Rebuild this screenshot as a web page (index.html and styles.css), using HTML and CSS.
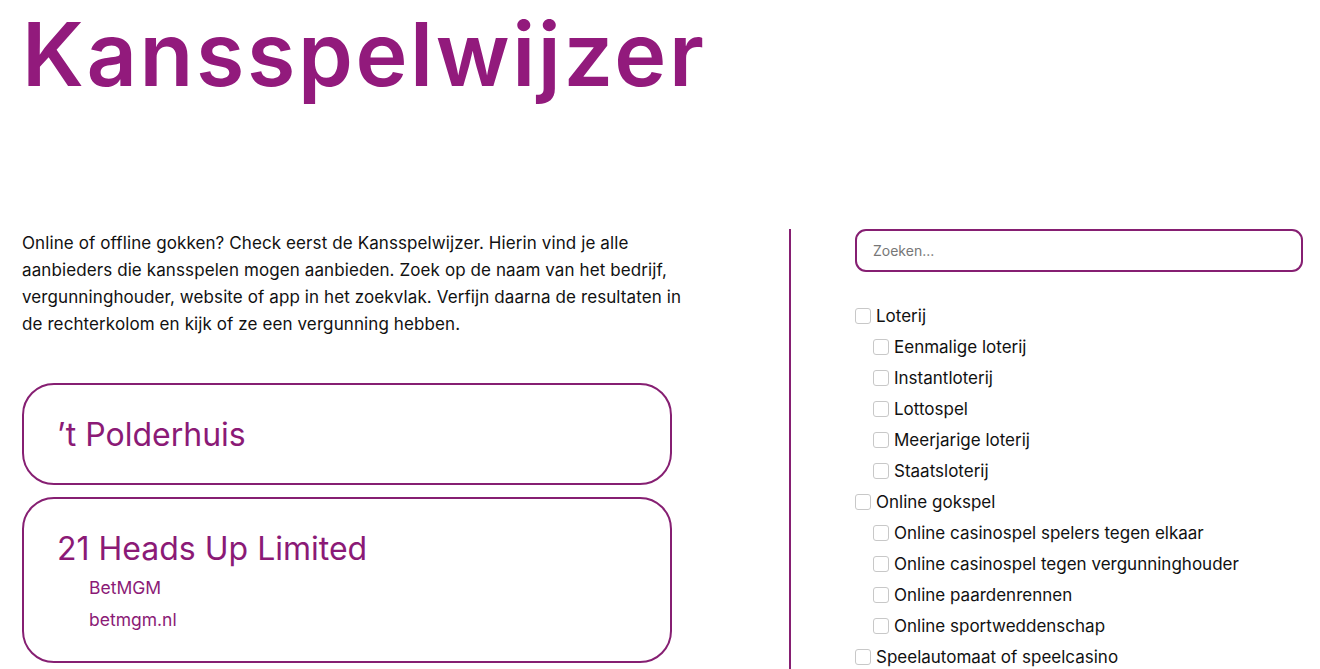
FILE: index.html
```html
<!DOCTYPE html>
<html lang="nl">
<head>
<meta charset="utf-8">
<title>Kansspelwijzer</title>
<link rel="stylesheet" href="styles.css">
</head>
<body>
<header class="page-header">
  <h1 class="title">Kansspelwijzer</h1>
</header>
<main class="layout">
  <section class="results">
    <p class="intro">Online of offline gokken? Check eerst de Kansspelwijzer. Hierin vind je alle aanbieders die kansspelen mogen aanbieden. Zoek op de naam van het bedrijf, vergunninghouder, website of app in het zoekvlak. Verfijn daarna de resultaten in de rechterkolom en kijk of ze een vergunning hebben.</p>
    <div class="cards">
      <article class="card">
        <h2 class="card-title">’t Polderhuis</h2>
      </article>
      <article class="card">
        <h2 class="card-title">21 Heads Up Limited</h2>
        <ul class="card-links">
          <li>BetMGM</li>
          <li>betmgm.nl</li>
        </ul>
      </article>
    </div>
  </section>
  <aside class="filters">
    <input class="search" type="text" placeholder="Zoeken...">
    <ul class="tree">
      <li><label class="opt"><span class="box"></span>Loterij</label>
        <ul class="sub">
          <li><label class="opt"><span class="box"></span>Eenmalige loterij</label></li>
          <li><label class="opt"><span class="box"></span>Instantloterij</label></li>
          <li><label class="opt"><span class="box"></span>Lottospel</label></li>
          <li><label class="opt"><span class="box"></span>Meerjarige loterij</label></li>
          <li><label class="opt"><span class="box"></span>Staatsloterij</label></li>
        </ul>
      </li>
      <li><label class="opt"><span class="box"></span>Online gokspel</label>
        <ul class="sub">
          <li><label class="opt"><span class="box"></span>Online casinospel spelers tegen elkaar</label></li>
          <li><label class="opt"><span class="box"></span>Online casinospel tegen vergunninghouder</label></li>
          <li><label class="opt"><span class="box"></span>Online paardenrennen</label></li>
          <li><label class="opt"><span class="box"></span>Online sportweddenschap</label></li>
        </ul>
      </li>
      <li><label class="opt"><span class="box"></span>Speelautomaat of speelcasino</label></li>
    </ul>
  </aside>
</main>
</body>
</html>
```
FILE: styles.css
```css
* { box-sizing: border-box; }
html, body { margin: 0; padding: 0; background: #fff; }
body {
  font-family: "Inter", "Liberation Sans", Arial, sans-serif;
  color: #111;
}
.page-header {
  padding: 0 22px;
  height: 229px;
}
.title {
  margin: 0;
  padding-top: 10px;
  font-family: "Inter", "Liberation Sans", Arial, sans-serif;
  font-weight: 600;
  font-size: 88px;
  line-height: 88px;
  letter-spacing: 2.6px;
  color: #921a7c;
}
.layout {
  display: grid;
  grid-template-columns: 650px 1fr;
  column-gap: 117px;
  padding: 0 17px 0 22px;
}
.intro {
  margin: 0 -14px 0 0;
  font-size: 17px;
  line-height: 27px;
  letter-spacing: 0.1px;
  padding-top: 1px;
  color: #111;
}
.cards {
  margin-top: 45px;
  display: flex;
  flex-direction: column;
  gap: 12px;
}
.card {
  border: 2px solid #861f72;
  border-radius: 32px;
  padding: 30px 33px 25px;
  min-height: 102px;
}
.card-title {
  margin: 0;
  font-weight: 400;
  font-size: 32px;
  line-height: 40px;
  color: #8b1a76;
}
.card-links {
  list-style: none;
  margin: 3px 0 0;
  padding: 0 0 0 32px;
  color: #8b1a76;
  font-size: 17.5px;
  line-height: 32px;
}
.filters {
  border-left: 2px solid #861f72;
  padding-left: 64px;
  min-height: 440px;
}
.search {
  display: block;
  width: 448px;
  height: 43px;
  border: 2px solid #861f72;
  border-radius: 11px;
  padding: 0 16px;
  font-family: "Inter", "Liberation Sans", Arial, sans-serif;
  font-size: 14px;
  color: #333;
  outline: none;
}
.search::placeholder { color: #777; }
.tree, .sub {
  list-style: none;
  margin: 0;
  padding: 0;
}
.tree { margin-top: 28px; }
.sub { padding-left: 18px; }
.opt {
  display: flex;
  align-items: center;
  gap: 5px;
  height: 31px;
  font-size: 17px;
  color: #111;
}
.box {
  width: 16px;
  height: 16px;
  border: 1px solid #c8c8c8;
  border-radius: 3px;
  background: #fff;
  flex: none;
}
```
